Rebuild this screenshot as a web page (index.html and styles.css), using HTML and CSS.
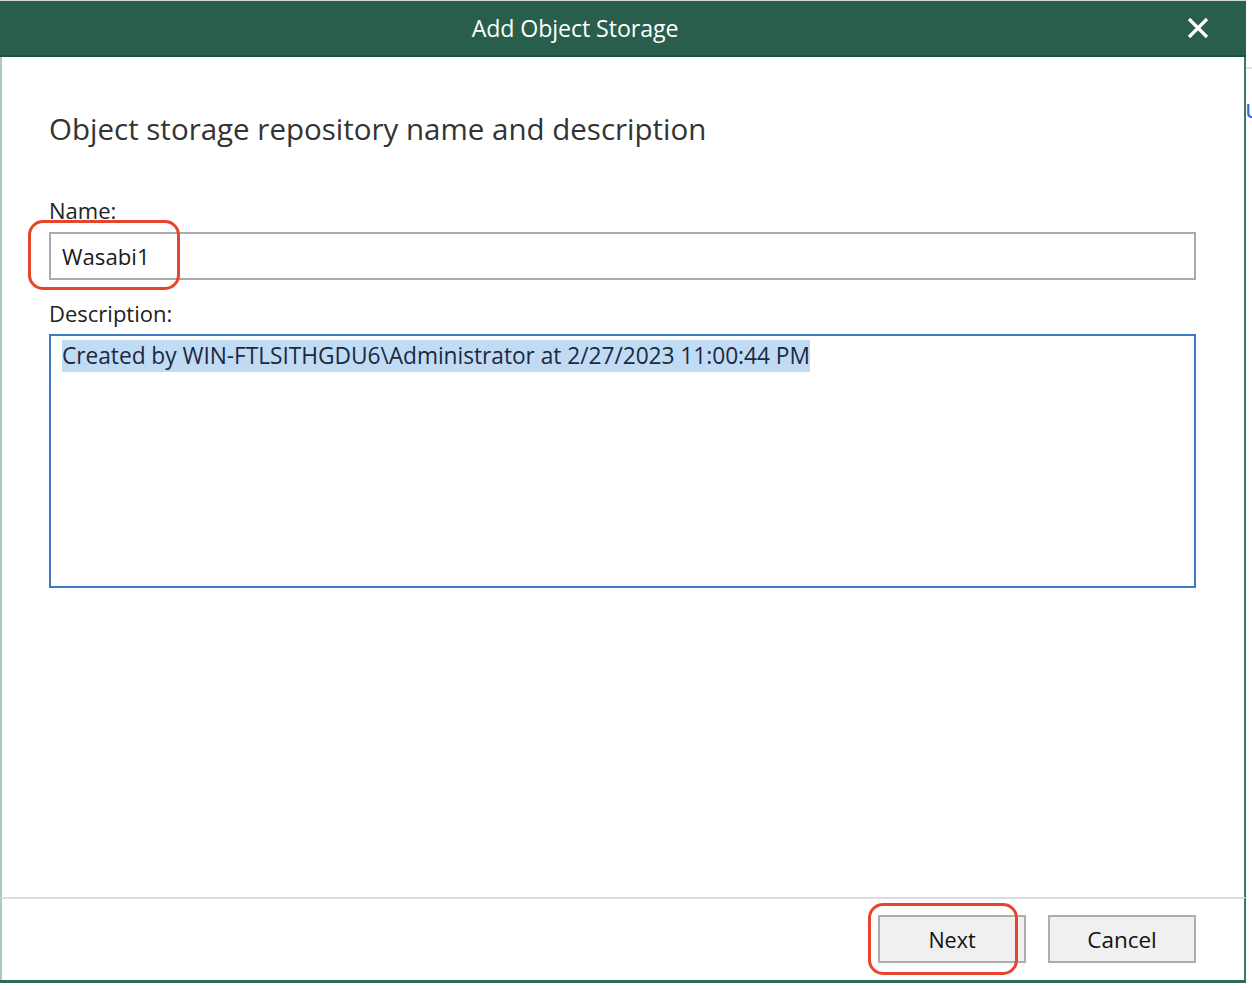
FILE: index.html
```html
<!DOCTYPE html>
<html>
<head>
<meta charset="utf-8">
<link rel="stylesheet" href="styles.css">
</head>
<body>
<div class="page">
  <div class="dialog">
    <div class="titlebar">
      <div class="title">Add Object Storage</div>
      <div class="close">
        <svg width="22" height="22" viewBox="0 0 22 22"><path d="M2 2 L20 20 M20 2 L2 20" stroke="#fff" stroke-width="3.2" stroke-linecap="butt" fill="none"/></svg>
      </div>
    </div>
    <div class="content">
      <h1 class="heading">Object storage repository name and description</h1>
      <label class="label">Name:</label>
      <div class="input">
        <span>Wasabi1</span>
        <div class="mark mark-name"></div>
      </div>
      <label class="label label-desc">Description:</label>
      <div class="textarea">
        <span class="sel">Created by WIN-FTLSITHGDU6\Administrator at 2/27/2023 11:00:44 PM</span>
      </div>
    </div>
    <div class="footer">
      <div class="btn btn-next"><span>Next</span><div class="mark mark-next"></div></div>
      <div class="btn btn-cancel"><span>Cancel</span></div>
    </div>
  </div>
  <div class="behind">
    <div class="behind-line"></div>
    <div class="behind-glyph">u</div>
  </div>
</div>
</body>
</html>
```
FILE: styles.css
```css
html, body {
  margin: 0;
  padding: 0;
  background: #ffffff;
}
body {
  font-family: "Open Sans", "Noto Sans", sans-serif;
  color: #222;
}
.page {
  width: 1252px;
  height: 990px;
  display: flex;
  overflow: hidden;
}
.dialog {
  width: 1246px;
  height: 983px;
  display: flex;
  flex-direction: column;
  flex: none;
  border-bottom: 3px solid #2e6a55;
  box-sizing: border-box;
}
.titlebar {
  height: 57px;
  box-sizing: border-box;
  background: #285e4b;
  border-top: 1px solid #d4d8d6;
  border-bottom: 2px solid #1f4e3e;
  display: flex;
  align-items: center;
  flex: none;
}
.title {
  flex: 1;
  text-align: center;
  color: #fff;
  font-size: 23.2px;
  letter-spacing: -0.1px;
}
.close {
  width: 96px;
  display: flex;
  justify-content: center;
  align-items: center;
}
.content {
  flex: 1;
  border-left: 2px solid #a8cbbf;
  border-right: 2px solid #3b7a62;
  padding: 52px 48px 0 47px;
  display: flex;
  flex-direction: column;
}
.heading {
  margin: 0;
  font-weight: normal;
  font-size: 29.5px;
  line-height: 40px;
  height: 40px;
  color: #333;
  white-space: nowrap;
}
.label {
  display: block;
  margin-top: 48px;
  font-size: 22px;
  line-height: 26px;
  height: 26px;
  color: #222;
}
.label-desc {
  margin-top: 20px;
}
.input {
  position: relative;
  margin-top: 9px;
  height: 48px;
  box-sizing: border-box;
  border: 2px solid #aaaaaa;
  padding-left: 11px;
  display: flex;
  align-items: center;
  font-size: 22.2px;
  color: #1a1a1a;
}
.textarea {
  margin-top: 8px;
  height: 254px;
  box-sizing: border-box;
  border: 2px solid #3d7cc4;
  padding: 4px 11px 0 11px;
  font-size: 22.75px;
  color: #1a2a40;
}
.sel {
  display: inline-block;
  background: #c2dbf5;
  line-height: 32px;
  height: 32px;
  white-space: nowrap;
  letter-spacing: -0.05px;
}
.footer {
  height: 83px;
  flex: none;
  border-top: 2px solid #dcdcdc;
  border-left: 2px solid #a8cbbf;
  border-right: 2px solid #3b7a62;
  display: flex;
  justify-content: flex-end;
  align-items: flex-start;
  gap: 22px;
  padding: 16px 48px 0 0;
  box-sizing: border-box;
}
.btn {
  position: relative;
  width: 148px;
  height: 48px;
  box-sizing: border-box;
  border: 2px solid #adadad;
  background: #f0f0f0;
  display: flex;
  justify-content: center;
  align-items: center;
  font-size: 21.5px;
  color: #111;
}
.btn-cancel {
  font-size: 22.5px;
}
.mark {
  position: absolute;
  border: 3px solid #e8442b;
  border-radius: 15px;
  box-sizing: border-box;
  pointer-events: none;
}
.mark-name {
  left: -23px;
  top: -14px;
  width: 152px;
  height: 70px;
}
.mark-next {
  left: -12px;
  top: -14px;
  width: 150px;
  height: 72px;
}
.behind {
  flex: 1;
  background: #ffffff;
  overflow: hidden;
}
.behind-line {
  height: 2px;
  margin-top: 67px;
  background: #e4e4e4;
}
.behind-glyph {
  margin-top: 24px;
  font-size: 26px;
  line-height: 30px;
  color: #2f6fd0;
  margin-left: -1px;
}
```
